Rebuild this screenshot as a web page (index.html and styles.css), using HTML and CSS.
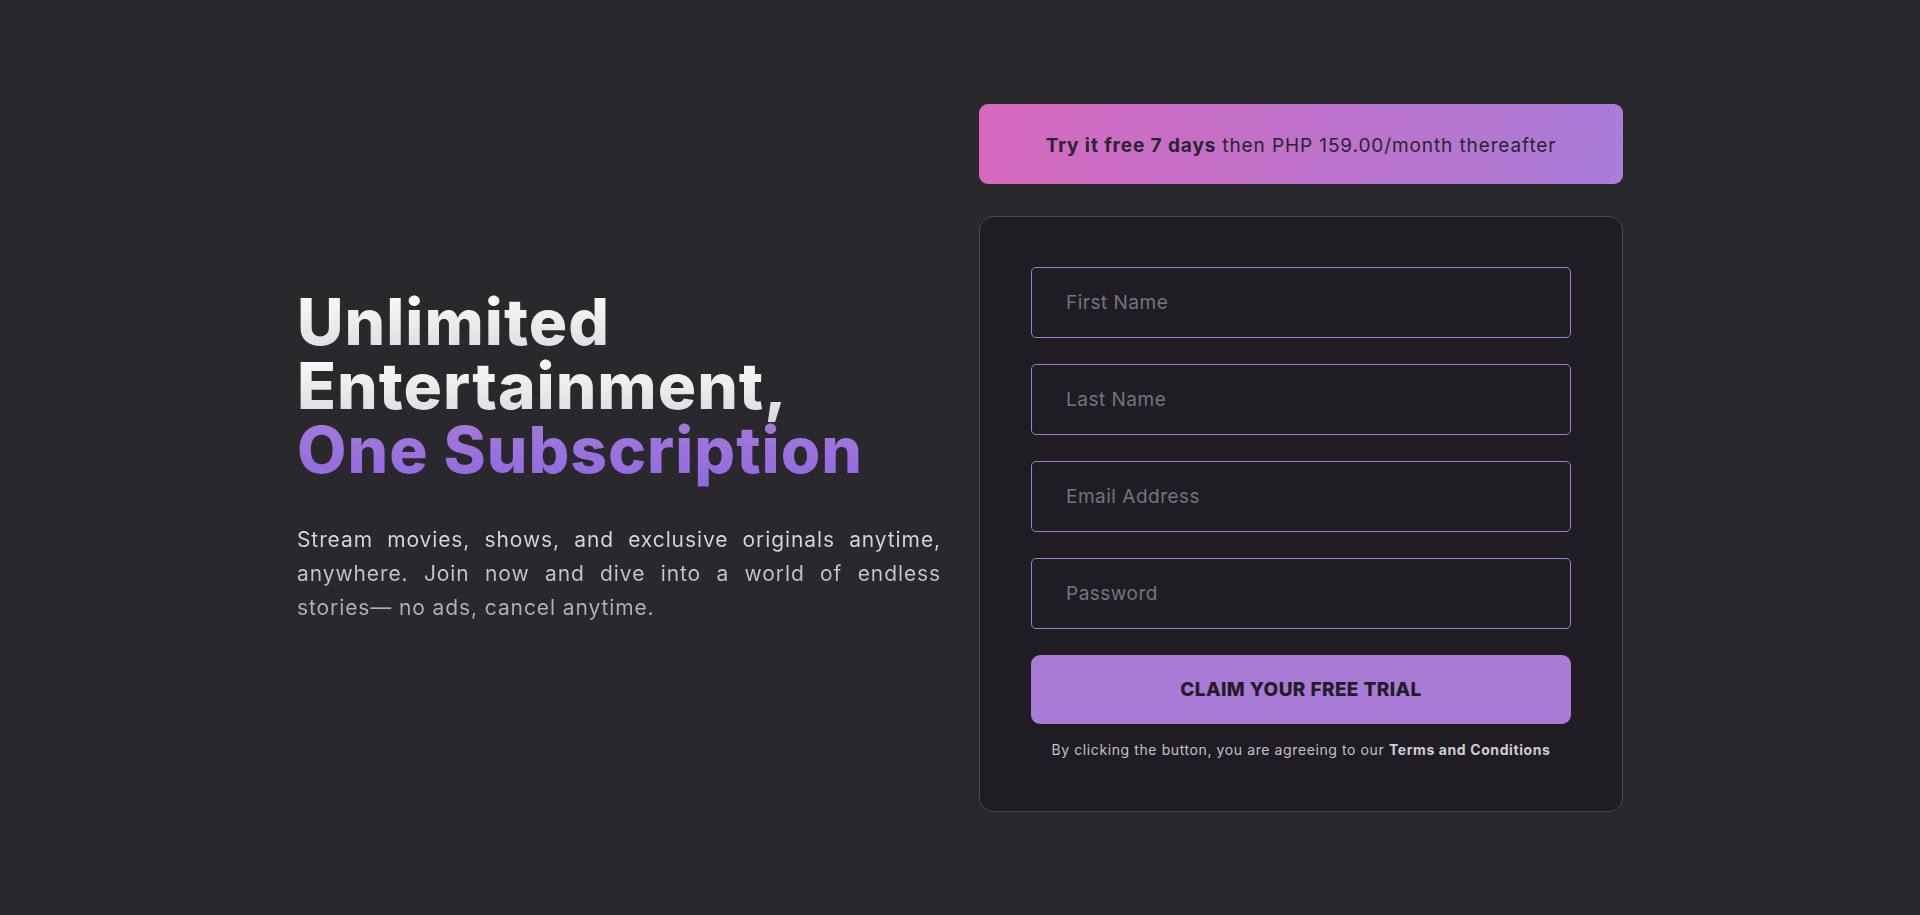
FILE: index.html
```html
<!DOCTYPE html>
<html lang="en">
<head>
<meta charset="utf-8">
<title>Unlimited Entertainment</title>
<link rel="stylesheet" href="styles.css">
</head>
<body>
<main class="wrap">
  <section class="intro">
    <h1 class="headline">
      <span class="hl-white">Unlimited<br>Entertainment,</span><br>
      <span class="hl-purple">One Subscription</span>
    </h1>
    <p class="lead">Stream movies, shows, and exclusive originals anytime, anywhere. Join now and dive into a world of endless stories— no ads, cancel anytime.</p>
  </section>
  <section class="signup">
    <div class="banner"><strong>Try it free 7 days</strong> then PHP 159.00/month thereafter</div>
    <form class="card">
      <input class="field" type="text" placeholder="First Name">
      <input class="field" type="text" placeholder="Last Name">
      <input class="field" type="email" placeholder="Email Address">
      <input class="field" type="password" placeholder="Password">
      <button class="cta" type="button">CLAIM YOUR FREE TRIAL</button>
      <p class="terms">By clicking the button, you are agreeing to our <strong>Terms and Conditions</strong></p>
    </form>
  </section>
</main>
</body>
</html>
```
FILE: styles.css
```css
* { box-sizing: border-box; }
html, body { margin: 0; padding: 0; }
body {
  background: #29282d;
  min-height: 100vh;
  display: flex;
  align-items: center;
  justify-content: center;
  font-family: "Inter", "Open Sans", sans-serif;
  color: #e4e3e8;
}
.wrap {
  display: grid;
  grid-template-columns: 644px 644px;
  gap: 38px;
  align-items: center;
}
.headline {
  margin: 0;
  font-size: 64px;
  line-height: 64px;
  font-weight: 800;
  letter-spacing: 1px;
}
.hl-white {
  background: linear-gradient(180deg, #ffffff 0%, #d9d8dd 100%);
  -webkit-background-clip: text;
  background-clip: text;
  color: transparent;
}
.hl-purple {
  background: linear-gradient(180deg, #a87bd9 0%, #8f69e2 100%);
  -webkit-background-clip: text;
  background-clip: text;
  color: transparent;
}
.lead {
  margin: 41px 0 0;
  font-size: 21px;
  line-height: 34px;
  letter-spacing: 0.9px;
  text-align: justify;
  background: linear-gradient(180deg, #e2e1e6 0%, #a9a8ae 100%);
  -webkit-background-clip: text;
  background-clip: text;
  color: transparent;
}
.signup {
  display: flex;
  flex-direction: column;
  gap: 32px;
}
.banner {
  height: 80px;
  border-radius: 9px;
  background: linear-gradient(100deg, #d669be 0%, #bf71ca 50%, #a97dd8 100%);
  display: flex;
  align-items: center;
  justify-content: center;
  font-size: 19px;
  letter-spacing: 0.9px;
  color: #2a2430;
  padding-top: 3px;
}
.banner strong { font-weight: 700; margin-right: 6px; }
.card {
  margin: 0;
  background: #1f1d23;
  border: 1px solid #4b4950;
  border-radius: 14px;
  padding: 50px 51px 51px;
  display: flex;
  flex-direction: column;
  gap: 26px;
}
.field {
  height: 71px;
  border: 1px solid #a57bd9;
  border-radius: 5px;
  background: transparent;
  padding: 0 34px;
  font-family: inherit;
  font-size: 19px;
  letter-spacing: 0.5px;
  color: #e4e3e8;
  outline: none;
}
.field::placeholder { color: #76747c; }
.cta {
  height: 69px;
  border: none;
  border-radius: 9px;
  background: #a97ad6;
  color: #231d28;
  font-family: inherit;
  font-size: 19px;
  font-weight: 800;
  letter-spacing: 0.4px;
  cursor: pointer;
}
.terms {
  margin: -11px 0 0;
  text-align: center;
  font-size: 14px;
  line-height: 21px;
  letter-spacing: 0.6px;
  color: #c3c1c9;
}
.terms strong { font-weight: 700; color: #cfcdd4; }
```
